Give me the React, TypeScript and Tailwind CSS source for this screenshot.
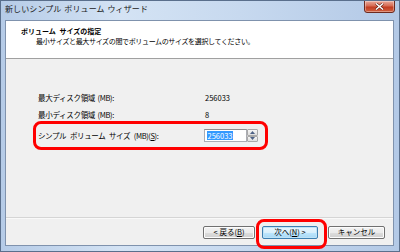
import React from "react";

const font = { fontFamily: '"Noto Sans CJK JP", "Noto Sans", sans-serif' };

function Btn({ children, w, primary }: { children: React.ReactNode; w: string; primary?: boolean }) {
  return (
    <div
      className={
        "h-[13px] flex items-center justify-center rounded-[2px] border text-[7.5px] leading-none text-black " +
        w +
        (primary
          ? " border-[#3c7fb1] bg-[linear-gradient(to_bottom,#eaf6fd,#d9f0fc_50%,#bee6fd_51%,#a7d9f5)] shadow-[inset_0_0_0_1px_#bfe3f7]"
          : " border-[#707070] bg-[linear-gradient(to_bottom,#f2f2f2,#ebebeb_50%,#dddddd_51%,#cfcfcf)] shadow-[inset_0_0_0_1px_#fcfcfc]")
      }
    >
      {children}
    </div>
  );
}

export default function App() {
  return (
    <div
      style={font}
      className="relative w-[400px] h-[252px] overflow-hidden flex flex-col border border-[#5a6f8c] bg-[linear-gradient(to_right,#b5cbe7,#d4e3f4_30%,#c7d9ef_60%,#b3c9e6)]"
    >
      {/* title bar */}
      <div className="h-[19px] flex items-start justify-between shrink-0">
        <div className="pl-[4px] pt-[3px] text-[8px] leading-[10px] tracking-[0.1px] text-[#1a1a1a] [word-spacing:1px]">
          新しいシンプル ボリューム ウィザード
        </div>
        <div className="mr-[4px] w-[31px] h-[13px] -mt-px rounded-b-[3px] border border-[#6d2a1f] bg-[linear-gradient(to_bottom,#e9a99b,#d66a52_45%,#c23c22_55%,#d0613f)] flex items-center justify-center shadow-[inset_0_0_0_1px_rgba(255,255,255,0.35)]">
          <svg width="9" height="7" viewBox="0 0 9 7">
            <path d="M1 0.5 L8 6.5 M8 0.5 L1 6.5" stroke="#5a1a10" strokeWidth="2.6" />
            <path d="M1 0.5 L8 6.5 M8 0.5 L1 6.5" stroke="#ffffff" strokeWidth="1.5" />
          </svg>
        </div>
      </div>

      {/* client area */}
      <div className="ml-[4px] mr-[5px] flex-1 flex flex-col border border-[#7f92ad] bg-[#f0f0f0]">
        {/* header */}
        <div className="h-[38px] shrink-0 bg-white border-b border-[#a0a0a0] pl-[15px] pt-[5px]">
          <div className="text-[7px] leading-[10px] font-bold text-black [word-spacing:2px]">ボリューム サイズの指定</div>
          <div className="pl-[15px] text-[7px] leading-[10px] tracking-[-0.35px] text-black">
            最小サイズと最大サイズの間でボリュームのサイズを選択してください。
          </div>
        </div>

        {/* body */}
        <div className="flex-1 pl-[32px] pt-[30px] flex flex-col text-[7.5px] text-black">
          <div className="h-[17px] flex items-center">
            <div className="w-[167px] tracking-[-0.3px] [word-spacing:1px]">最大ディスク領域 (MB):</div>
            <div className="text-[7.5px]">256033</div>
          </div>
          <div className="h-[17px] flex items-center">
            <div className="w-[167px] tracking-[-0.3px] [word-spacing:1px]">最小ディスク領域 (MB):</div>
            <div className="text-[7.5px]">8</div>
          </div>
          <div className="mt-[5px] h-[15px] flex items-center">
            <div className="w-[166px] tracking-[-0.4px] [word-spacing:2.5px]">
              シンプル ボリューム サイズ (MB)(<span className="underline">S</span>):
            </div>
            <div className="w-[43px] h-[13px] border border-[#abadb3] border-t-[#8e8f8f] bg-white flex items-center pl-[2px]">
              <span className="bg-[#3399ff] text-white text-[7.5px] leading-[9px] px-[0.5px]">256033</span>
            </div>
            <div className="w-[11px] h-[13px] flex flex-col">
              <div className="flex-1 border border-[#a9a9a9] rounded-[1px] bg-[linear-gradient(to_bottom,#f6f6f6,#dedede)] flex items-center justify-center">
                <svg width="5" height="3" viewBox="0 0 5 3"><path d="M0 3 L2.5 0 L5 3Z" fill="#4d6185" /></svg>
              </div>
              <div className="flex-1 border border-[#a9a9a9] rounded-[1px] bg-[linear-gradient(to_bottom,#f6f6f6,#dedede)] flex items-center justify-center">
                <svg width="5" height="3" viewBox="0 0 5 3"><path d="M0 0 L2.5 3 L5 0Z" fill="#4d6185" /></svg>
              </div>
            </div>
          </div>
        </div>

        {/* separator + buttons */}
        <div className="h-[2px] shrink-0 border-t border-[#d5d5d5] bg-white/60" />
        <div className="h-[26px] shrink-0 flex items-center justify-end pr-[8px]">
          <Btn w="w-[52px]">&lt; 戻る(<span className="underline">B</span>)</Btn>
          <div className="ml-[7px]">
            <Btn w="w-[56px]" primary>
              次へ(<span className="underline">N</span>) &gt;
            </Btn>
          </div>
          <div className="ml-[10px]">
            <Btn w="w-[57px]">キャンセル</Btn>
          </div>
        </div>
      </div>
      <div className="h-[5px] shrink-0" />

      {/* red annotations */}
      <div className="absolute left-[32px] top-[120px] w-[235px] h-[29px] rounded-[8px] border-[3px] border-[#ff0000]" />
      <div className="absolute left-[255px] top-[218px] w-[71px] h-[30px] rounded-[8px] border-[3px] border-[#ff0000]" />
    </div>
  );
}
